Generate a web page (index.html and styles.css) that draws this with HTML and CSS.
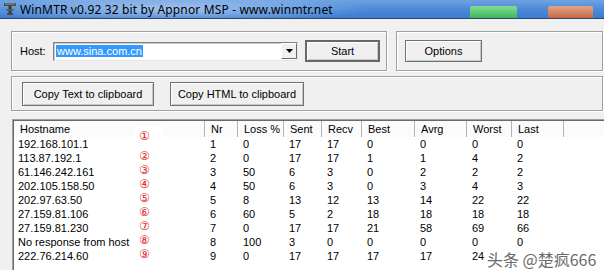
FILE: index.html
```html
<!DOCTYPE html>
<html>
<head>
<meta charset="utf-8">
<link rel="stylesheet" href="styles.css">
</head>
<body>
<div class="titlebar">
  <svg class="app-icon" width="14" height="14" viewBox="0 0 14 14">
    <rect x="1" y="1" width="12" height="3" fill="#4a4a4a"/>
    <rect x="2" y="1.5" width="10" height="1" fill="#9a9a9a"/>
    <rect x="5.5" y="4" width="3" height="9" fill="#3a3a3a"/>
    <rect x="3" y="7" width="8" height="1.5" fill="#5a5a5a"/>
    <rect x="4" y="11" width="6" height="2" fill="#4a4a4a"/>
  </svg>
  <span class="title-text">WinMTR v0.92 32 bit by Appnor MSP - www.winmtr.net</span>
  <span class="tb-btn tb-max"></span>
  <span class="tb-btn tb-close"></span>
</div>
<div class="main">
  <div class="top-row">
    <div class="group group-host">
      <span class="host-label">Host:</span>
      <div class="combo">
        <span class="combo-value"><span class="sel">www.sina.com.cn</span></span>
        <span class="combo-arrow"><svg width="7" height="4" viewBox="0 0 7 4"><path d="M0 0h7L3.5 4z" fill="#000"/></svg></span>
      </div>
      <button class="btn btn-default btn-start">Start</button>
    </div>
    <div class="group group-options">
      <button class="btn btn-options">Options</button>
    </div>
  </div>
  <div class="group group-copy">
    <button class="btn btn-copy-text">Copy Text to clipboard</button>
    <button class="btn btn-copy-html">Copy HTML to clipboard</button>
  </div>
  <div class="list">
    <div class="row header">
      <div class="cell host">Hostname<span class="mark mark-first">①</span></div>
      <div class="cell">Nr</div>
      <div class="cell">Loss %</div>
      <div class="cell">Sent</div>
      <div class="cell">Recv</div>
      <div class="cell">Best</div>
      <div class="cell">Avrg</div>
      <div class="cell">Worst</div>
      <div class="cell">Last</div>
      <div class="cell"></div>
    </div>
    <div class="row"><div class="cell host">192.168.101.1</div><div class="cell">1</div><div class="cell">0</div><div class="cell">17</div><div class="cell">17</div><div class="cell">0</div><div class="cell">0</div><div class="cell">0</div><div class="cell">0</div><div class="cell"></div></div>
    <div class="row"><div class="cell host">113.87.192.1<span class="mark">②</span></div><div class="cell">2</div><div class="cell">0</div><div class="cell">17</div><div class="cell">17</div><div class="cell">1</div><div class="cell">1</div><div class="cell">4</div><div class="cell">2</div><div class="cell"></div></div>
    <div class="row"><div class="cell host">61.146.242.161<span class="mark">③</span></div><div class="cell">3</div><div class="cell">50</div><div class="cell">6</div><div class="cell">3</div><div class="cell">0</div><div class="cell">2</div><div class="cell">2</div><div class="cell">2</div><div class="cell"></div></div>
    <div class="row"><div class="cell host">202.105.158.50<span class="mark">④</span></div><div class="cell">4</div><div class="cell">50</div><div class="cell">6</div><div class="cell">3</div><div class="cell">0</div><div class="cell">3</div><div class="cell">4</div><div class="cell">3</div><div class="cell"></div></div>
    <div class="row"><div class="cell host">202.97.63.50<span class="mark">⑤</span></div><div class="cell">5</div><div class="cell">8</div><div class="cell">13</div><div class="cell">12</div><div class="cell">13</div><div class="cell">14</div><div class="cell">22</div><div class="cell">22</div><div class="cell"></div></div>
    <div class="row"><div class="cell host">27.159.81.106<span class="mark">⑥</span></div><div class="cell">6</div><div class="cell">60</div><div class="cell">5</div><div class="cell">2</div><div class="cell">18</div><div class="cell">18</div><div class="cell">18</div><div class="cell">18</div><div class="cell"></div></div>
    <div class="row"><div class="cell host">27.159.81.230<span class="mark">⑦</span></div><div class="cell">7</div><div class="cell">0</div><div class="cell">17</div><div class="cell">17</div><div class="cell">21</div><div class="cell">58</div><div class="cell">69</div><div class="cell">66</div><div class="cell"></div></div>
    <div class="row"><div class="cell host">No response from host<span class="mark">⑧</span></div><div class="cell">8</div><div class="cell">100</div><div class="cell">3</div><div class="cell">0</div><div class="cell">0</div><div class="cell">0</div><div class="cell">0</div><div class="cell">0</div><div class="cell"></div></div>
    <div class="row"><div class="cell host">222.76.214.60<span class="mark">⑨</span></div><div class="cell">9</div><div class="cell">0</div><div class="cell">17</div><div class="cell">17</div><div class="cell">17</div><div class="cell">17</div><div class="cell">24</div><div class="cell"></div><div class="cell"></div></div>
    <div class="watermark">头条 @楚疯666</div>
  </div>
</div>
</body>
</html>
```

FILE: styles.css
```css
* { box-sizing: border-box; }
html, body { margin: 0; padding: 0; }
body {
  width: 604px;
  height: 270px;
  overflow: hidden;
  background: #f0f0f0;
  font-family: "Liberation Sans", Arial, sans-serif;
  font-size: 11px;
  color: #000;
}

.titlebar {
  position: relative;
  height: 19px;
  border-bottom: 1px solid #2a4870;
  background:
    radial-gradient(ellipse 200px 14px at 170px 9px, rgba(190,215,245,0.75), rgba(190,215,245,0) 100%),
    linear-gradient(to bottom, #6fa2e2 0%, #4a88d8 55%, #3c7cd0 100%);
  display: flex;
  align-items: center;
  padding-left: 3px;
}
.app-icon { flex: none; }
.title-text {
  margin-left: 3px;
  font-family: "Noto Sans", "Open Sans", sans-serif;
  font-size: 12px;
  color: #000;
  white-space: nowrap;
  letter-spacing: 0.15px;
}
.tb-btn {
  position: absolute;
  top: 6px;
  height: 12px;
  border-radius: 2px 2px 0 0;
  filter: blur(0.6px);
}
.tb-max {
  left: 470px;
  width: 47px;
  background: linear-gradient(to bottom, #7fe08f, #3fb55c);
}
.tb-close {
  left: 548px;
  width: 45px;
  background: linear-gradient(to bottom, #e3a487, #c8684a);
}

.main {
  padding: 12px 1px 0 11px;
}
.top-row {
  display: flex;
  gap: 9px;
}
.group {
  border: 1px solid #a0a0a0;
  box-shadow: inset 1px 1px 0 #fff, 1px 1px 0 #fff;
  display: flex;
  align-items: center;
}
.group-host {
  width: 376px;
  height: 40px;
  padding-left: 8px;
}
.host-label {
  width: 33px;
  flex: none;
}
.combo {
  width: 245px;
  height: 19px;
  background: #fff;
  border: 1px solid;
  border-color: #828282 #e6e6e6 #e6e6e6 #828282;
  box-shadow: inset 1px 1px 0 #c8c8c8;
  display: flex;
  align-items: center;
  justify-content: space-between;
}
.combo-value {
  padding-left: 2px;
  display: flex;
}
.sel {
  background: #3399ff;
  color: #fff;
  height: 12px;
  line-height: 12px;
  padding: 0 1px;
}
.combo-arrow {
  width: 16px;
  height: 16px;
  background: #f0f0f0;
  border: 1px solid;
  border-color: #fff #6a6a6a #6a6a6a #fff;
  display: flex;
  align-items: center;
  justify-content: center;
}
.btn {
  font-family: "Liberation Sans", Arial, sans-serif;
  font-size: 11px;
  color: #000;
  background: #f0f0f0;
  border: 1px solid #707070;
  box-shadow: inset 1px 1px 0 #fff, inset -1px -1px 0 #c8c8c8;
  padding: 0;
  margin: 0;
  flex: none;
}
.btn-default {
  border: 2px solid #686868;
}
.btn-start {
  width: 75px;
  height: 22px;
  margin-left: 7px;
}
.group-options {
  flex: 1;
  height: 40px;
  padding-left: 8px;
}
.btn-options {
  width: 77px;
  height: 22px;
}
.group-copy {
  margin-top: 5px;
  height: 35px;
  padding-left: 10px;
  gap: 16px;
}
.btn-copy-text { width: 132px; height: 24px; }
.btn-copy-html { width: 134px; height: 24px; }

.list {
  position: relative;
  margin-top: 8px;
  margin-left: 1px;
  margin-right: -1px;
  height: 160px;
  background: #fff;
  border-top: 1px solid #a0a0a0;
  border-left: 1px solid #a0a0a0;
  box-shadow: inset 1px 1px 0 #6a6a6a;
  padding: 1px 0 0 1px;
}
.row {
  display: grid;
  grid-template-columns: 190px 33px 46px 38px 40px 53px 52px 45px 52px 1fr;
  height: 14px;
  line-height: 14px;
}
.row.header {
  height: 16px;
  line-height: 16px;
  background: #fbfbfb;
}
.cell {
  position: relative;
  padding-left: 6px;
  white-space: nowrap;
}
.row .cell.host { padding-left: 4px; }
.row.header .cell { border-left: 1px solid #b4b4b4; padding-left: 6px; }
.row.header .cell.host { border-left: none; padding-left: 6px; }

.mark {
  position: absolute;
  left: 125px;
  top: -2px;
  color: #e02828;
  font-family: "DejaVu Sans", sans-serif;
  font-size: 12px;
  line-height: 14px;
}
.mark-first {
  left: 120px;
  top: 5px;
  width: 29px;
  height: 19px;
  padding-left: 5px;
  padding-top: 3px;
  background: #fff;
}

.watermark {
  position: absolute;
  left: 474px;
  top: 131px;
  font-family: "Noto Sans CJK SC", sans-serif;
  font-size: 16px;
  line-height: 16px;
  color: #6a6a6a;
  text-shadow: 0 0 2px #fff, 0 0 1px #fff;
  white-space: nowrap;
}
```
